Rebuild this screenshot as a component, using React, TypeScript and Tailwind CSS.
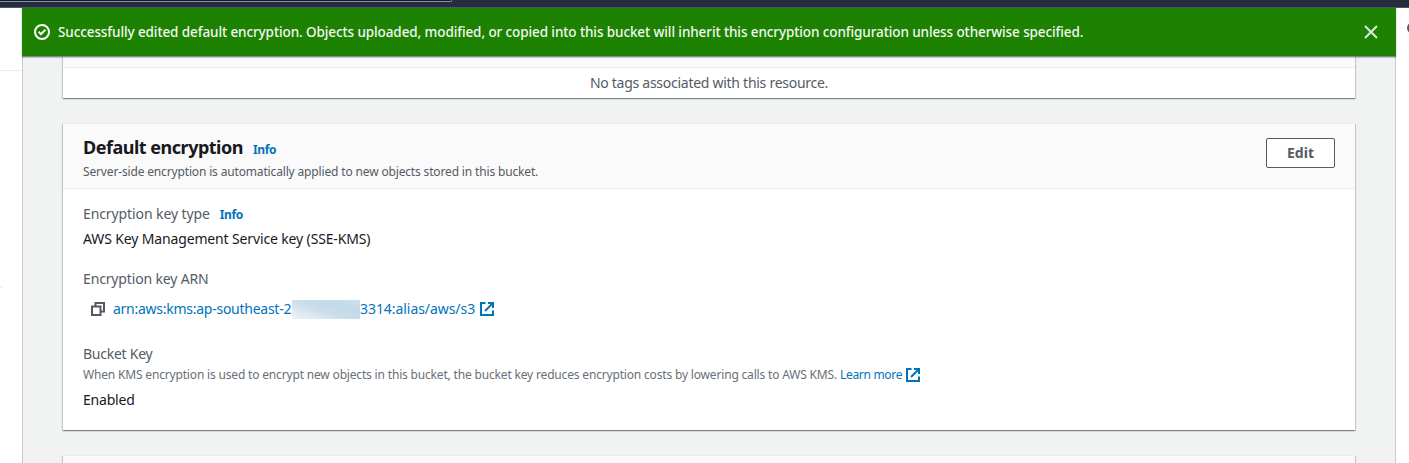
import type { ReactNode } from "react";

const cardShadow =
  "border-t border-[#eaeded] shadow-[0_1px_1px_0_rgba(0,28,36,0.3),1px_1px_1px_0_rgba(0,28,36,0.15),-1px_1px_1px_0_rgba(0,28,36,0.15)]";

function ExternalIcon() {
  return (
    <svg className="block h-4 w-4 shrink-0" viewBox="0 0 16 16" fill="none" stroke="#0073bb" strokeWidth="2">
      <path d="M6.5 2H2v12h12V9.5" />
      <path d="M9 2h5v5" />
      <path d="M6 10l7.5-7.5" />
    </svg>
  );
}

function CopyIcon() {
  return (
    <svg className="block h-4 w-4 shrink-0" viewBox="0 0 16 16" fill="none" stroke="#545b64" strokeWidth="2">
      <path d="M2 5.5h8.5V14H2z" />
      <path d="M5.5 5.5V2H14v8.5h-3.5" />
    </svg>
  );
}

function SuccessIcon() {
  return (
    <svg className="block h-4 w-4 shrink-0" viewBox="0 0 16 16" fill="none" stroke="#ffffff" strokeWidth="2">
      <circle cx="8" cy="8" r="7" />
      <path d="M4.6 7.8l2.4 2.4 4.4-4.4" />
    </svg>
  );
}

function CloseIcon() {
  return (
    <svg className="block h-4 w-4 shrink-0" viewBox="0 0 16 16" fill="none" stroke="#dfe9dc" strokeWidth="2">
      <path d="M2 2l12 12M14 2L2 14" />
    </svg>
  );
}

function Info() {
  return <a className="text-xs leading-5 font-bold tracking-[-0.35px] text-[#0073bb]">Info</a>;
}

function Label({ children }: { children: ReactNode }) {
  return <div className="leading-5 text-[#545b64]">{children}</div>;
}

function Flash() {
  return (
    <div className="relative -ml-px flex h-12 w-[1374px] items-center bg-[#1d8102] pr-[17px] pl-3 shadow-[0_1px_1px_0_rgba(0,28,36,0.4),0_2px_1px_0_rgba(0,28,36,0.15)]">
      <SuccessIcon />
      <span className="ml-2 flex-1 pt-[2px] text-[13.5px] font-medium tracking-[-0.1px] whitespace-nowrap text-[#f2f8f0]">
        Successfully edited default encryption. Objects uploaded, modified, or copied into this bucket will inherit this
        encryption configuration unless otherwise specified.
      </span>
      <CloseIcon />
    </div>
  );
}

function TagsCard() {
  return (
    <section className="bg-white shadow-[0_1px_1px_0_rgba(0,28,36,0.3),1px_1px_1px_0_rgba(0,28,36,0.15),-1px_1px_1px_0_rgba(0,28,36,0.15)]">
      <div className="h-3 border-b border-[#eaeded] bg-[#fafafa]" />
      <div className="flex h-[30px] items-center justify-center leading-5 tracking-[-0.27px] text-[#545b64]">
        No tags associated with this resource.
      </div>
    </section>
  );
}

function EncryptionCard() {
  return (
    <section className={`mt-[25px] h-[307px] bg-white ${cardShadow}`}>
      <header className="flex h-[65px] items-start justify-between border-b border-[#eaeded] bg-[#fafafa] pr-5 pl-5">
        <div className="pt-3">
          <div className="flex items-baseline gap-[10px]">
            <h2 className="text-lg leading-[22px] font-bold tracking-[-0.49px] text-[#16191f]">Default encryption</h2>
            <Info />
          </div>
          <p className="mt-[2px] text-xs leading-5 tracking-[-0.155px] text-[#545b64]">
            Server-side encryption is automatically applied to new objects stored in this bucket.
          </p>
        </div>
        <button className="mt-[14px] flex h-[30px] w-[69px] items-center justify-center rounded-[2px] border border-[#545b64] bg-white font-bold tracking-[0.05px] text-[#545b64]">
          Edit
        </button>
      </header>
      <div className="px-5 pt-[15px]">
        <div>
          <Label>
            <span className="flex items-baseline gap-[10px]">
              <span className="tracking-[-0.1px]">Encryption key type</span>
              <Info />
            </span>
          </Label>
          <div className="mt-1 leading-5 tracking-[-0.14px]">AWS Key Management Service key (SSE-KMS)</div>
        </div>
        <div className="mt-5">
          <Label>
            <span className="tracking-[-0.15px]">Encryption key ARN</span>
          </Label>
          <div className="mt-[10px] flex h-5 items-center pl-[7px] text-[#0073bb]">
            <CopyIcon />
            <a className="ml-[7px] flex h-5 items-center leading-5 whitespace-nowrap">
              <span className="w-[178.5px] tracking-[-0.26px]">arn:aws:kms:ap-southeast-2</span>
              <span className="h-[19px] w-[68px] bg-[linear-gradient(20deg,#edf3f9_0%,#dbe8f2_25%,#c9ddeb_45%,#c3dae9_75%,#cfe1ee_100%)]" />
              <span className="ml-[0.5px] tracking-[-0.06px]">3314:alias/aws/s3</span>
              <span className="ml-1">
                <ExternalIcon />
              </span>
            </a>
          </div>
        </div>
        <div className="mt-[25px]">
          <Label>
            <span className="tracking-[-0.25px]">Bucket Key</span>
          </Label>
          <div className="mt-px flex h-5 items-center text-xs leading-5 text-[#687078]">
            <span className="tracking-[-0.173px]">
              When KMS encryption is used to encrypt new objects in this bucket, the bucket key reduces encryption costs by
              lowering calls to AWS KMS.
            </span>
            <a className="ml-[3px] flex items-center gap-[3px] tracking-[-0.32px] text-[#0073bb]">
              Learn more
              <ExternalIcon />
            </a>
          </div>
          <div className="mt-[5px] leading-5 tracking-[-0.2px]">Enabled</div>
        </div>
      </div>
    </section>
  );
}

export default function App() {
  return (
    <div className="flex h-[463px] w-[1409px] flex-col overflow-hidden bg-white font-['Noto_Sans','Open_Sans',sans-serif] text-sm text-[#16191f]">
      <div className="h-2 shrink-0 border-b border-[#545366] bg-[#232f3e]">
        <div className="h-[2px] w-[452px] rounded-br-[2px] border-r border-b border-[#8a919b] bg-[#0f1b2a]" />
      </div>
      <div className="flex min-h-0 flex-1">
        <aside className="w-[22px] shrink-0">
          <div className="h-[63px] border-b border-[#eaeded]" />
          <div className="h-[217px] w-[2px] border-b border-[#eaeded]" />
        </aside>
        <main className="w-[1374px] shrink-0 border-x border-[#c6cccd] bg-[#f1f3f3]">
          <Flash />
          <div className="px-10">
            <TagsCard />
            <EncryptionCard />
            <section className={`mt-[25px] h-10 bg-[#fafafa] ${cardShadow}`} />
          </div>
        </main>
        <aside className="flex-1 overflow-hidden pt-[14px] pl-[11px]">
          <div className="h-3 w-3 rounded-full border-2 border-[#545b64]" />
        </aside>
      </div>
    </div>
  );
}
